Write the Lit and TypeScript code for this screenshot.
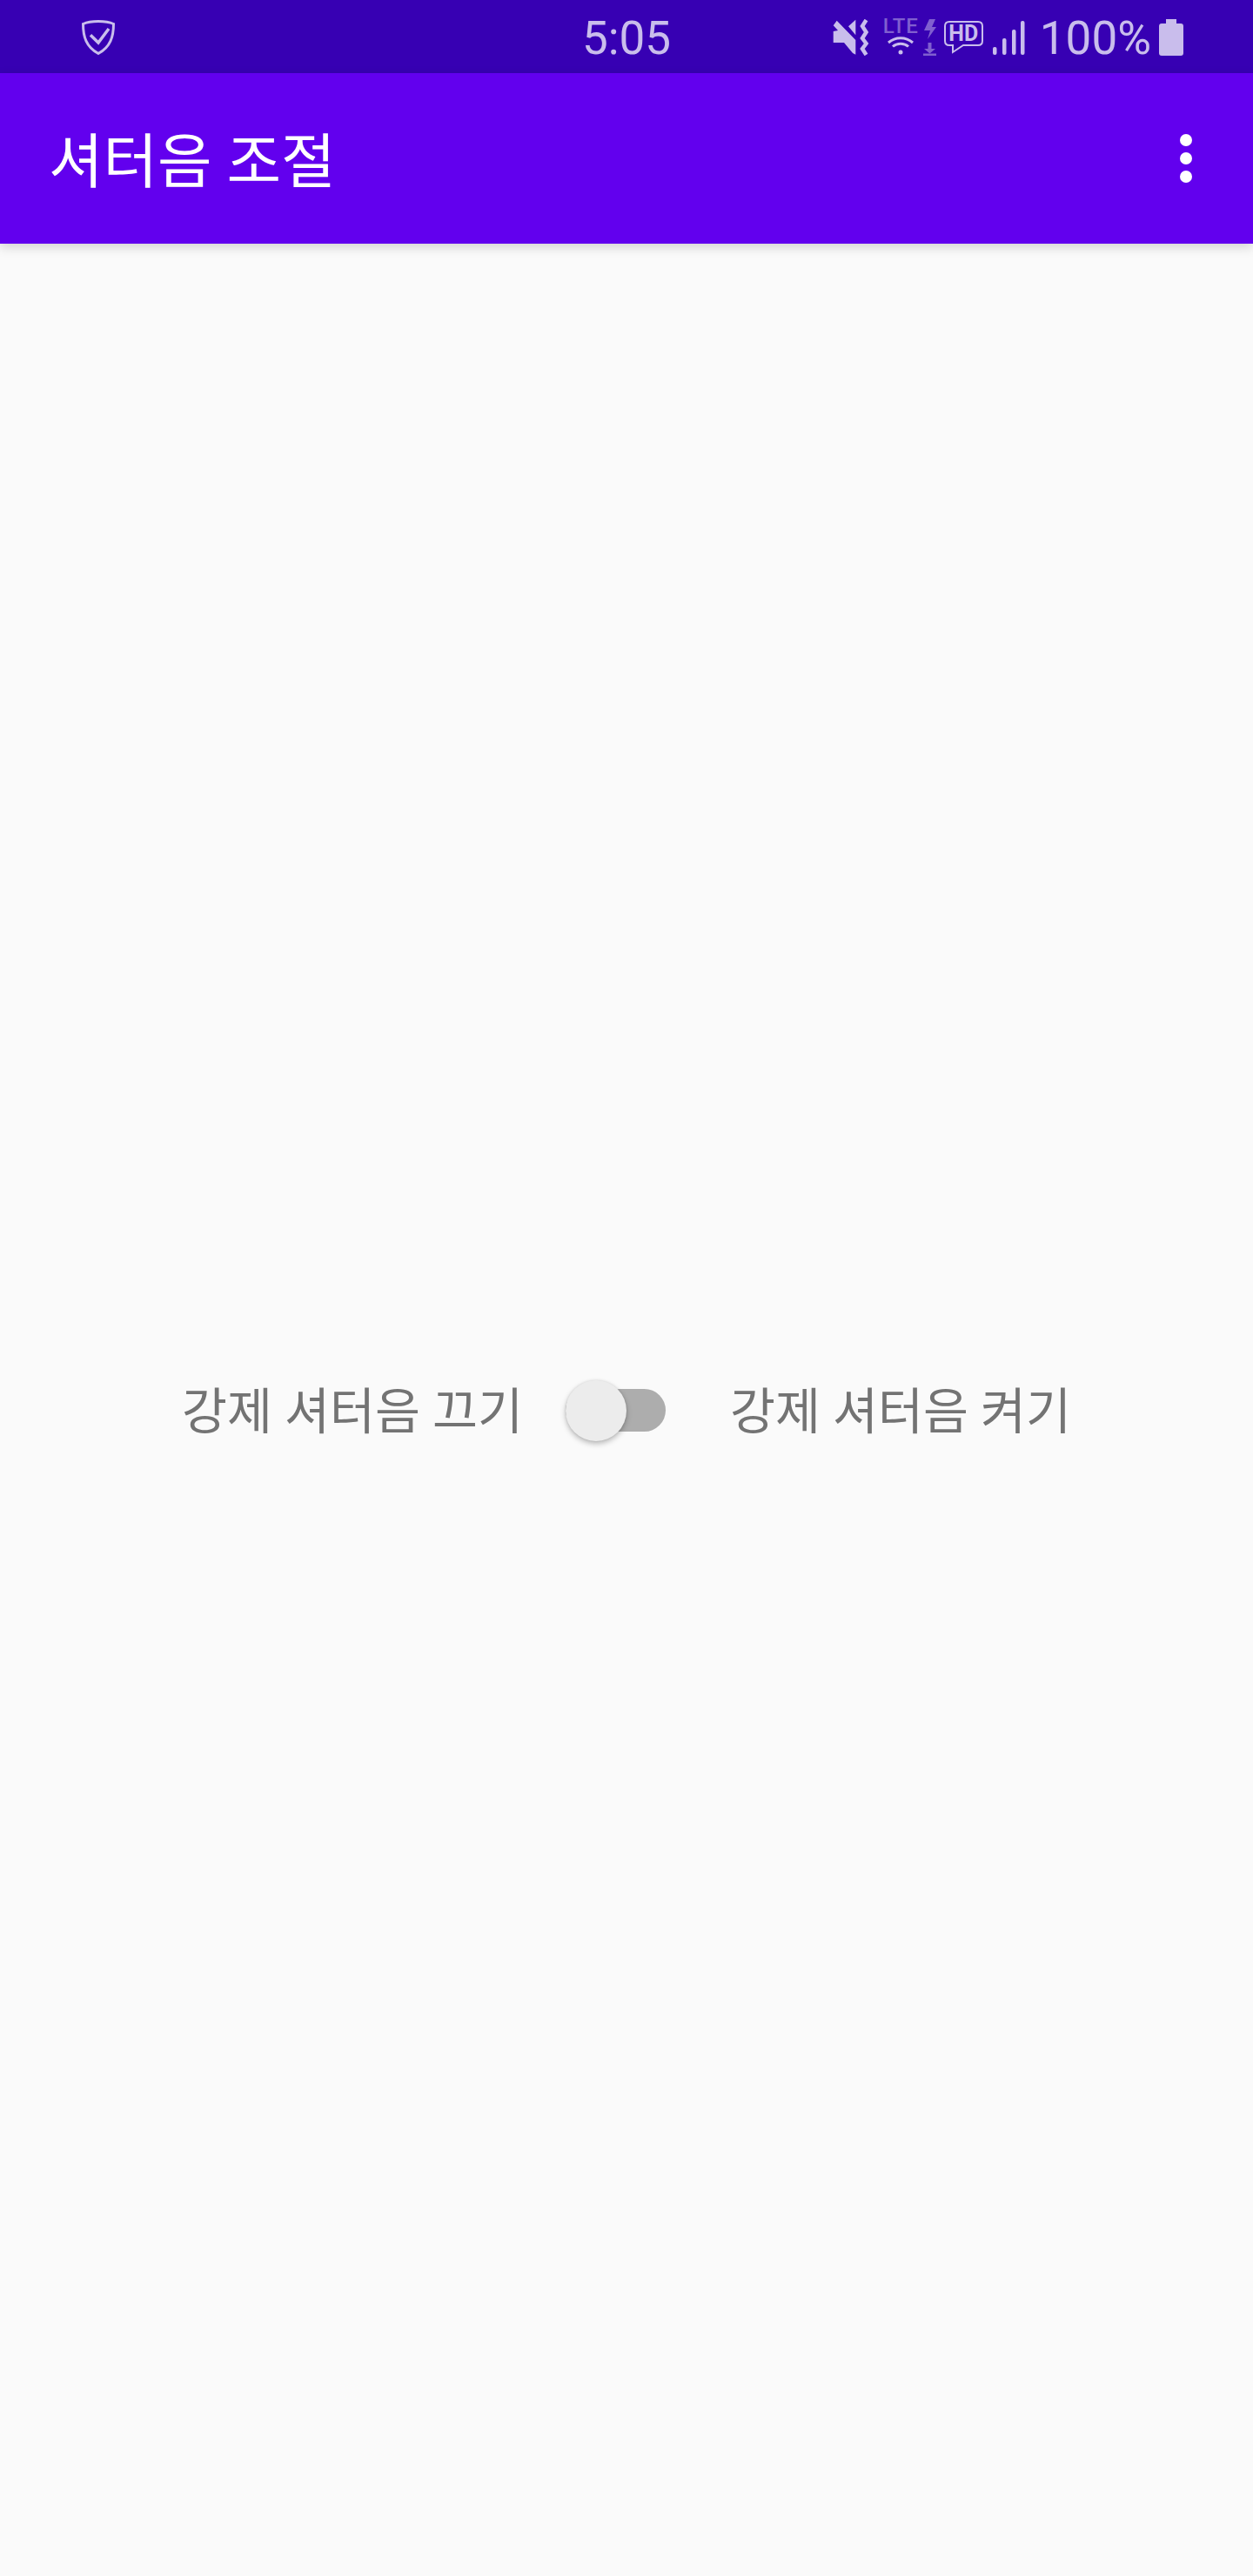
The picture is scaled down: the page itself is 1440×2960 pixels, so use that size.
import { LitElement, css, html } from 'lit';
import { customElement } from 'lit/decorators.js';

@customElement('app-root')
export class AppRoot extends LitElement {
    static styles = css`
        :host {
            display: flex;
            flex-direction: column;
            min-height: 2960px;
            background: #fafafa;
            font-family: Roboto, 'Noto Sans CJK KR', sans-serif;
        }

        .status {
            display: grid;
            grid-template-columns: 1fr auto 1fr;
            align-items: center;
            height: 84px;
            background: #3700b3;
            color: #c9bdec;
        }

        .status-left {
            display: flex;
            align-items: center;
            padding-left: 93px;
        }

        .clock {
            font-size: 53px;
            line-height: 84px;
            padding-top: 2px;
        }

        .status-right {
            display: flex;
            align-items: center;
            justify-content: flex-end;
            padding-right: 80px;
            height: 84px;
        }

        .status-right svg {
            display: block;
            flex: none;
        }

        .mute {
            margin-right: 16px;
        }

        .net {
            display: flex;
            flex-direction: column;
            align-items: center;
            justify-content: space-between;
            width: 41px;
            height: 42px;
        }

        .lte-text {
            font-size: 24px;
            font-weight: 500;
            letter-spacing: 1px;
            line-height: 17px;
            opacity: 0.5;
        }

        .bolt {
            margin-left: 5px;
            opacity: 0.5;
        }

        .hd {
            position: relative;
            width: 45px;
            height: 38px;
            margin: 0 11px 0 9px;
        }

        .hd span {
            position: absolute;
            left: 0;
            right: 0;
            top: 0;
            text-align: center;
            font-size: 25px;
            font-weight: 700;
            line-height: 29px;
        }

        .signal {
            margin-right: 17px;
        }

        .pct {
            font-size: 53px;
            line-height: 84px;
            padding-top: 2px;
            margin-right: 9px;
        }

        .toolbar {
            position: relative;
            display: flex;
            align-items: center;
            justify-content: space-between;
            height: 196px;
            padding: 0 70px 0 56px;
            background: #6200ee;
            color: #fff;
            box-shadow: 0 4px 12px rgba(0, 0, 0, 0.16);
        }

        .title {
            font-size: 68px;
            line-height: 1;
            margin-top: 10px;
        }

        .dots {
            display: flex;
            flex-direction: column;
            gap: 7px;
        }

        .dots i {
            display: block;
            width: 14px;
            height: 14px;
            border-radius: 50%;
            background: #fff;
        }

        .content {
            flex: 1;
            display: flex;
            flex-direction: column;
            align-items: center;
            padding-top: 1305px;
        }

        .row {
            display: flex;
            align-items: center;
            font-size: 56.5px;
            color: #737373;
        }

        .row span {
            line-height: 64px;
            padding-top: 6px;
        }

        .switch {
            position: relative;
            width: 115px;
            height: 49px;
            margin: 0 74px 0 49px;
            border-radius: 25px;
            background: #adadad;
        }

        .thumb {
            position: absolute;
            left: 0;
            top: -10px;
            width: 70px;
            height: 70px;
            border-radius: 50%;
            background: #ececec;
            box-shadow: 0 3px 6px rgba(0, 0, 0, 0.26), 0 0 3px rgba(0, 0, 0, 0.1);
        }
    `;

    render() {
        return html`
            <div class="status">
                <div class="status-left">
                    <svg width="40" height="42" viewBox="0 0 40 42" fill="none" stroke="currentColor">
                        <path stroke-width="3" d="M20 2.500C14 2.500 7 3.500 2.500 5.500C2.500 20 6 32 20 39.500C34 32 37.500 20 37.500 5.500C33 3.500 26 2.500 20 2.500Z" />
                        <path stroke-width="3.500" d="M11 18.300L20 27L32 11" />
                    </svg>
                </div>
                <div class="clock">5:05</div>
                <div class="status-right">
                    <svg class="mute" width="42" height="42" viewBox="0 0 42 42" fill="currentColor">
                        <path d="M4.700 1.700L0.700 7.300L6 13L0.700 14V27H13L23 39L26.300 40.700V24Z" />
                        <path d="M18 8.300L26.300 0.700V18.300Z" />
                        <path d="M38.500 1L34 8L38.500 15L34 22L38.500 28L34 34L38.500 41" fill="none" stroke="currentColor" stroke-width="4.500" />
                    </svg>
                    <div class="net">
                        <div class="lte-text">LTE</div>
                        <svg width="30" height="22" viewBox="0 0 30 22" fill="none" stroke="currentColor" stroke-width="3">
                            <path d="M1 7C9 0 21 0 29 7" />
                            <path d="M6 11.500C11 7 19 7 24 11.500" />
                            <circle cx="15" cy="18" r="2.500" fill="currentColor" stroke="none" />
                        </svg>
                    </div>
                    <svg class="bolt" width="15" height="42" viewBox="0 0 15 42" fill="currentColor">
                        <path d="M7 0H14L10 9H15L5 23L8 13H1Z" />
                        <path d="M5.500 27H9.500V34H14L7.500 39.500L1 34H5.500Z" />
                        <path d="M0 39.500H15V42H0Z" />
                    </svg>
                    <div class="hd">
                        <svg width="45" height="38" viewBox="0 0 45 38" fill="none" stroke="currentColor" stroke-width="2">
                            <path d="M6 1H39Q44 1 44 6V23Q44 28 39 28H22L10 36V28H6Q1 28 1 23V6Q1 1 6 1Z" />
                        </svg>
                        <span>HD</span>
                    </div>
                    <svg class="signal" width="37" height="39" viewBox="0 0 37 39" fill="currentColor">
                        <rect x="0" y="30" width="4.500" height="9" rx="2" />
                        <rect x="11" y="20" width="4.500" height="19" rx="2" />
                        <rect x="22" y="10" width="4.500" height="29" rx="2" />
                        <rect x="32" y="0" width="4.500" height="39" rx="2" />
                    </svg>
                    <div class="pct">100%</div>
                    <svg width="28" height="42" viewBox="0 0 28 42" fill="currentColor">
                        <path d="M8 0H20V5H25Q28 5 28 8V39Q28 42 25 42H3Q0 42 0 39V8Q0 5 3 5H8Z" />
                    </svg>
                </div>
            </div>
            <div class="toolbar">
                <div class="title">셔터음 조절</div>
                <div class="dots"><i></i><i></i><i></i></div>
            </div>
            <div class="content">
                <div class="row">
                    <span>강제 셔터음 끄기</span>
                    <div class="switch"><div class="thumb"></div></div>
                    <span>강제 셔터음 켜기</span>
                </div>
            </div>
        `;
    }
}
